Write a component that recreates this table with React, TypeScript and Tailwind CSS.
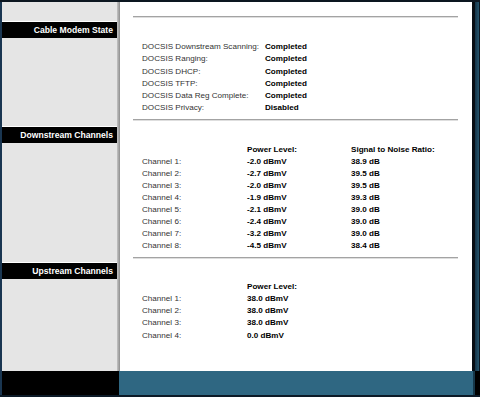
const docsis: [string, string][] = [
  ['DOCSIS Downstream Scanning:', 'Completed'],
  ['DOCSIS Ranging:', 'Completed'],
  ['DOCSIS DHCP:', 'Completed'],
  ['DOCSIS TFTP:', 'Completed'],
  ['DOCSIS Data Reg Complete:', 'Completed'],
  ['DOCSIS Privacy:', 'Disabled'],
];

const downstream: [string, string][] = [
  ['-2.0 dBmV', '38.9 dB'],
  ['-2.7 dBmV', '39.5 dB'],
  ['-2.0 dBmV', '39.5 dB'],
  ['-1.9 dBmV', '39.3 dB'],
  ['-2.1 dBmV', '39.0 dB'],
  ['-2.4 dBmV', '39.0 dB'],
  ['-3.2 dBmV', '39.0 dB'],
  ['-4.5 dBmV', '38.4 dB'],
];

const upstream = ['38.0 dBmV', '38.0 dBmV', '38.0 dBmV', '0.0 dBmV'];

function SideHeader({ title, top }: { title: string; top: string }) {
  return (
    <div className={`${top} border-t border-white bg-black h-[17px] flex items-center justify-end pr-[4px] text-white font-bold text-[8.6px]`}>
      {title}
    </div>
  );
}

function Rule({ className = '' }: { className?: string }) {
  return (
    <div className={`ml-[13px] w-[325px] ${className}`}>
      <div className="h-px bg-[#a3a3a3]" />
      <div className="h-px bg-[#dedede]" />
    </div>
  );
}

export default function App() {
  return (
    <div
      className="w-[480px] h-[397px] overflow-hidden bg-[#0c1620] flex flex-col text-[8.1px]"
      style={{ fontFamily: '"Liberation Sans", Arial, sans-serif' }}
    >
      {/* top edge */}
      <div className="h-[2px] bg-[#0c1620]" />

      {/* body */}
      <div className="flex h-[369px]">
        <div className="w-[2px] bg-[#1a3651]" />

        {/* sidebar */}
        <div className="w-[115px] bg-[#e5e5e5] flex flex-col">
          <SideHeader title="Cable Modem State" top="mt-[19px]" />
          <SideHeader title="Downstream Channels" top="mt-[88px]" />
          <SideHeader title="Upstream Channels" top="mt-[119px]" />
        </div>
        <div className="w-[3px] bg-gradient-to-r from-[#c4c4c4] to-[#8e8e8e]" />

        {/* main */}
        <div className="w-[352px] bg-white flex flex-col">
          <Rule className="mt-[14px]" />

          <div className="mt-[23px] pl-[22px] grid grid-cols-[123px_1fr] leading-[12.25px]">
            {docsis.map(([k, v]) => (
              <div key={k} className="contents">
                <span className="text-[#333]">{k}</span>
                <span className="font-bold text-black">{v}</span>
              </div>
            ))}
          </div>

          <Rule className="mt-[4px]" />

          <div className="mt-[23px] pl-[22px] grid grid-cols-[105px_104px_1fr] leading-[12px]">
            <span />
            <span className="font-bold text-black">Power Level:</span>
            <span className="font-bold text-black">Signal to Noise Ratio:</span>
            {downstream.map(([p, s], i) => (
              <div key={i} className="contents">
                <span className="text-[#333]">Channel {i + 1}:</span>
                <span className="font-bold text-black">{p}</span>
                <span className="font-bold text-black">{s}</span>
              </div>
            ))}
          </div>

          <Rule className="mt-[5px]" />

          <div className="mt-[22px] pl-[22px] grid grid-cols-[105px_1fr] leading-[12.25px]">
            <span />
            <span className="font-bold text-black">Power Level:</span>
            {upstream.map((p, i) => (
              <div key={i} className="contents">
                <span className="text-[#333]">Channel {i + 1}:</span>
                <span className="font-bold text-black">{p}</span>
              </div>
            ))}
          </div>
        </div>

        {/* right edge */}
        <div className="w-[3px] bg-[#070d13]" />
        <div className="w-[4px] bg-gradient-to-r from-[#143246] to-[#25556d]" />
      </div>

      {/* footer */}
      <div className="flex h-[24px]">
        <div className="w-[2px] bg-[#1a3651]" />
        <div className="w-[117px] bg-black" />
        <div className="w-[354px] bg-[#2f6782]" />
        <div className="w-[2px] bg-[#16384a]" />
        <div className="flex-1 bg-black" />
      </div>
      <div className="h-[2px] bg-[#0c1a27]" />
    </div>
  );
}
